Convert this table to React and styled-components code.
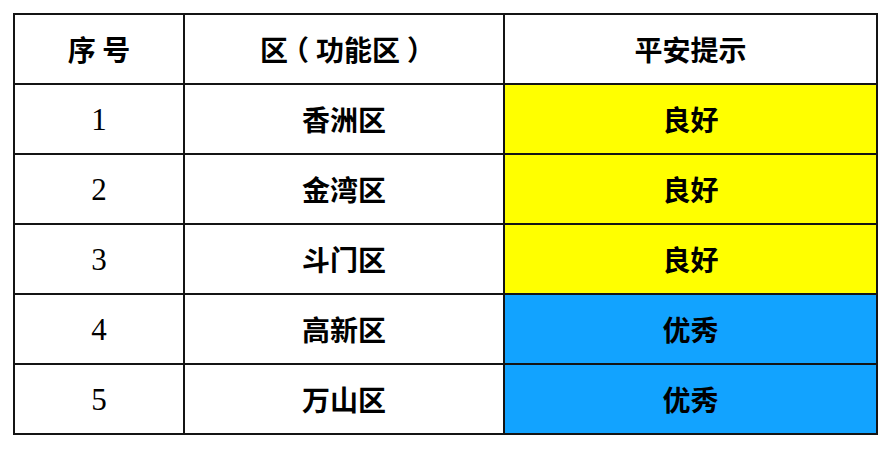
import React from 'react';
import styled, { createGlobalStyle } from 'styled-components';

const GlobalStyle = createGlobalStyle`
  html, body {
    margin: 0;
    padding: 0;
    background: #ffffff;
  }
  body {
    font-family: "Noto Sans CJK SC", "Liberation Sans", sans-serif;
    color: #000;
  }
`;

const Page = styled.div`
  width: 890px;
  height: 450px;
  padding: 13px 0 0 13px;
  box-sizing: border-box;
`;

const Table = styled.table`
  border-collapse: collapse;
  table-layout: fixed;
  width: 863px;
`;

const Cell = styled.td`
  height: 68px;
  padding: 0;
  border: 2px solid #141414;
  text-align: center;
  vertical-align: middle;
  background: ${p => p.$bg || '#ffffff'};
  font-family: ${p => p.$num ? '"Liberation Serif", serif' : '"Noto Sans CJK SC", sans-serif'};
  font-size: ${p => p.$num ? '31px' : '28px'};
  font-weight: ${p => p.$num ? 400 : 700};
  line-height: 1;
`;

const HeadCell = styled(Cell).attrs({ as: 'th' })`
  font-weight: 700;
`;

// full-width bracket, centred in a 1em box like the original
const Paren = styled.span`
  display: inline-block;
  width: 1em;
  text-align: center;
  font-feature-settings: "halt" 1;
`;

const STATUS = {
  good: { label: '良好', bg: '#ffff00' },
  great: { label: '优秀', bg: '#12a3ff' },
};

const rows = [
  { no: 1, area: '香洲区', status: 'good' },
  { no: 2, area: '金湾区', status: 'good' },
  { no: 3, area: '斗门区', status: 'good' },
  { no: 4, area: '高新区', status: 'great' },
  { no: 5, area: '万山区', status: 'great' },
];

export default function App() {
  return (
    <Page>
      <GlobalStyle />
      <Table>
        <colgroup>
          <col style={{ width: 170 }} />
          <col style={{ width: 320 }} />
          <col style={{ width: 373 }} />
        </colgroup>
        <thead>
          <tr>
            <HeadCell>序 号</HeadCell>
            <HeadCell>区<Paren>（</Paren>功能区<Paren>）</Paren></HeadCell>
            <HeadCell>平安提示</HeadCell>
          </tr>
        </thead>
        <tbody>
          {rows.map(r => (
            <tr key={r.no}>
              <Cell $num>{r.no}</Cell>
              <Cell>{r.area}</Cell>
              <Cell $bg={STATUS[r.status].bg}>{STATUS[r.status].label}</Cell>
            </tr>
          ))}
        </tbody>
      </Table>
    </Page>
  );
}
